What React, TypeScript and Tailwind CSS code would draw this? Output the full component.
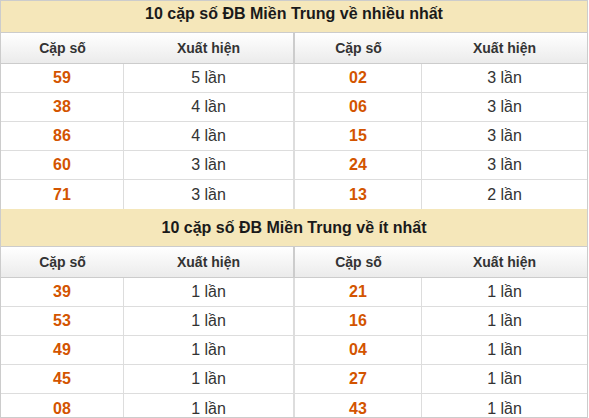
import React from "react";

type Pair = [string, string];

const most: { left: Pair[]; right: Pair[] } = {
  left: [["59", "5 lần"], ["38", "4 lần"], ["86", "4 lần"], ["60", "3 lần"], ["71", "3 lần"]],
  right: [["02", "3 lần"], ["06", "3 lần"], ["15", "3 lần"], ["24", "3 lần"], ["13", "2 lần"]],
};

const least: { left: Pair[]; right: Pair[] } = {
  left: [["39", "1 lần"], ["53", "1 lần"], ["49", "1 lần"], ["45", "1 lần"], ["08", "1 lần"]],
  right: [["21", "1 lần"], ["16", "1 lần"], ["04", "1 lần"], ["27", "1 lần"], ["43", "1 lần"]],
};

function Section({ title, data }: { title: string; data: { left: Pair[]; right: Pair[] } }) {
  return (
    <div>
      {/* title bar */}
      <div className="h-[38px] flex items-center justify-center bg-[#f5e7ba] border-b border-[#cccccc] text-[16px] font-bold text-[#1a1a1a]">
        {title}
      </div>

      {/* column headers */}
      <div className="h-[31px] flex border-b border-[#cccccc] bg-gradient-to-b from-[#ffffff] to-[#ebebeb] text-[14px] font-bold text-[#333333]">
        <div className="w-[123px] flex items-center justify-center">Cặp số</div>
        <div className="w-[170px] flex items-center justify-center border-r border-[#cccccc]">Xuất hiện</div>
        <div className="w-[128px] flex items-center justify-center border-l border-[#cccccc]">Cặp số</div>
        <div className="w-[165px] flex items-center justify-center">Xuất hiện</div>
      </div>

      {data.left.map((l, i) => {
        const r = data.right[i];
        return (
          <div key={i} className="h-[29px] flex border-b border-[#dddddd] last:border-b-0 bg-white text-[16px]">
            <div className="w-[123px] flex items-center justify-center border-r border-[#dddddd] font-bold text-[#d35400]">{l[0]}</div>
            <div className="w-[170px] flex items-center justify-center border-r border-[#dddddd] text-[#333333]">{l[1]}</div>
            <div className="w-[128px] flex items-center justify-center border-l border-r border-[#dddddd] font-bold text-[#d35400]">{r[0]}</div>
            <div className="w-[165px] flex items-center justify-center text-[#333333]">{r[1]}</div>
          </div>
        );
      })}
    </div>
  );
}

export default function App() {
  return (
    <div className="w-[589px] h-[418px] bg-white" style={{ fontFamily: '"Liberation Sans", Arial, sans-serif' }}>
      <div className="w-[588px] h-[418px] overflow-hidden border border-[#cccccc]">
        <div className="-mt-[6px]">
          <Section title="10 cặp số ĐB Miền Trung về nhiều nhất" data={most} />
          <Section title="10 cặp số ĐB Miền Trung về ít nhất" data={least} />
        </div>
      </div>
    </div>
  );
}
